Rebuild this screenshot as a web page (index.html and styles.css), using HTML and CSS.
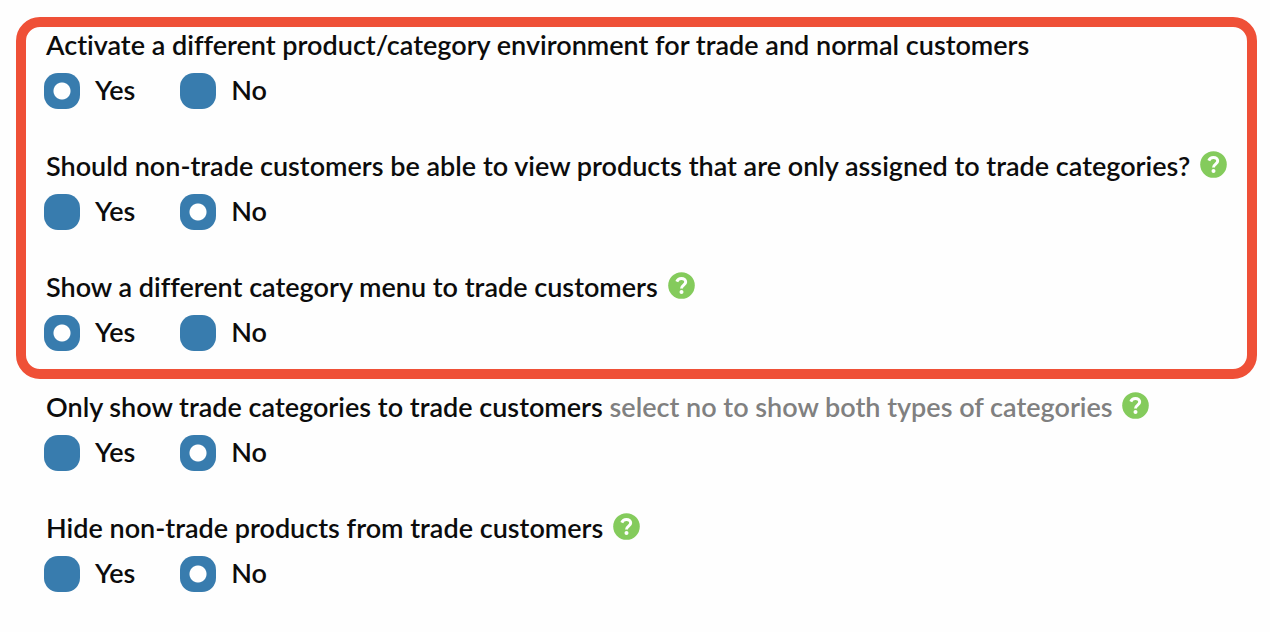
FILE: index.html
```html
<!DOCTYPE html>
<html lang="en">
<head>
    <meta charset="UTF-8">
    <title>Trade customer settings</title>
    <link rel="stylesheet" href="styles.css">
</head>
<body>
    <svg class="sprite" width="0" height="0" aria-hidden="true">
        <symbol id="question" viewBox="0 0 27 27">
            <circle cx="13.5" cy="13.5" r="13.3" fill="#84cb5c"/>
            <path d="M8.8 9.6C9.7 7.4 11.4 6.5 13.4 6.5c2.5 0 4.3 1.4 4.3 3.5 0 3.1-4.2 3.1-4.2 6.4" fill="none" stroke="#fff" stroke-width="3"/>
            <circle cx="13.5" cy="20" r="2" fill="#fff"/>
        </symbol>
    </svg>
    <form class="settings">
        <div class="highlight">
            <fieldset class="setting">
                <legend>Activate a different product/category environment for trade and normal customers</legend>
                <div class="options">
                    <label class="option"><input type="radio" name="environment" value="yes" checked> Yes</label>
                    <label class="option"><input type="radio" name="environment" value="no"> No</label>
                </div>
            </fieldset>
            <fieldset class="setting">
                <legend>Should non-trade customers be able to view products that are only assigned to trade categories? <button type="button" class="help" aria-label="Help"><svg><use href="#question"/></svg></button></legend>
                <div class="options">
                    <label class="option"><input type="radio" name="view" value="yes"> Yes</label>
                    <label class="option"><input type="radio" name="view" value="no" checked> No</label>
                </div>
            </fieldset>
            <fieldset class="setting">
                <legend>Show a different category menu to trade customers <button type="button" class="help" aria-label="Help"><svg><use href="#question"/></svg></button></legend>
                <div class="options">
                    <label class="option"><input type="radio" name="menu" value="yes" checked> Yes</label>
                    <label class="option"><input type="radio" name="menu" value="no"> No</label>
                </div>
            </fieldset>
        </div>
        <div class="more">
            <fieldset class="setting">
                <legend>Only show trade categories to trade customers <span class="hint">select no to show both types of categories</span> <button type="button" class="help" aria-label="Help"><svg><use href="#question"/></svg></button></legend>
                <div class="options">
                    <label class="option"><input type="radio" name="only-trade" value="yes"> Yes</label>
                    <label class="option"><input type="radio" name="only-trade" value="no" checked> No</label>
                </div>
            </fieldset>
            <fieldset class="setting">
                <legend>Hide non-trade products from trade customers <button type="button" class="help" aria-label="Help"><svg><use href="#question"/></svg></button></legend>
                <div class="options">
                    <label class="option"><input type="radio" name="hide" value="yes"> Yes</label>
                    <label class="option"><input type="radio" name="hide" value="no" checked> No</label>
                </div>
            </fieldset>
        </div>
    </form>
</body>
</html>
```

FILE: styles.css
```css
* {
    box-sizing: border-box;
}

body {
    margin: 0;
    background: #fefefe;
    color: #0c0c0c;
    font-family: Lato, "Open Sans", sans-serif;
    font-size: 27px;
    font-weight: 600;
    font-variant-ligatures: none;
    line-height: 32px;
}

.sprite {
    display: none;
}

.settings {
    padding: 17px 13px 0 16px;
}

.highlight {
    display: grid;
    gap: 41px;
    padding: 2px 18px 18px;
    border: 10px solid #ef5037;
    border-radius: 24px;
}

.more {
    display: grid;
    gap: 41px;
    padding: 12px 28px;
}

.setting {
    min-width: 0;
    margin: 0;
    padding: 0;
    border: 0;
}

.setting legend {
    height: 32px;
    padding: 0 0 0 2px;
    white-space: nowrap;
}

.hint {
    color: #808080;
}

.help {
    width: 27px;
    height: 27px;
    margin: 0 0 0 3px;
    padding: 0;
    border: 0;
    background: none;
    vertical-align: -2px;
    cursor: pointer;
}

.help svg {
    display: block;
    width: 27px;
    height: 27px;
}

.options {
    display: flex;
    gap: 45px;
    padding-top: 12px;
}

.option {
    display: flex;
    align-items: flex-start;
    gap: 15px;
    line-height: 34px;
    cursor: pointer;
}

.option input {
    appearance: none;
    width: 36px;
    height: 36px;
    margin: 0;
    border-radius: 14px;
    background: #387cae;
    cursor: pointer;
}

.option input:checked {
    background: radial-gradient(circle, #fff 8px, #387cae 9px);
}
```
